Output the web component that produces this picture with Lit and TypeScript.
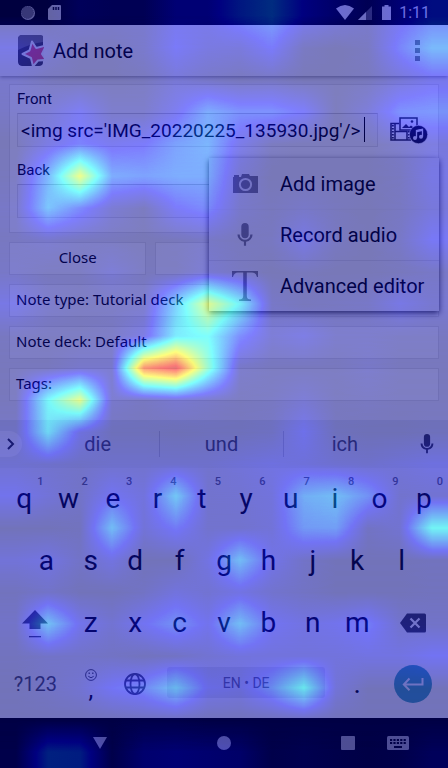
import { LitElement, html, svg, css } from "lit";
import { customElement, state } from "lit/decorators.js";

/* Attention values on a 14 x 24 grid, in hundredths. */
const HEAT: number[][] = [
  [0, 0, 5, 4, 4, 10, 10, 17, 21, 12, 8, 4, 10, 15],
  [9, 5, 1, 1, 4, 12, 8, 7, 13, 2, 0, 2, 15, 25],
  [4, 1, 0, 0, 1, 6, 3, 1, 2, 0, 0, 1, 6, 10],
  [3, 5, 11, 3, 3, 10, 22, 17, 17, 12, 0, 6, 17, 18],
  [0, 8, 14, 10, 12, 20, 24, 9, 1, 0, 0, 0, 3, 7],
  [1, 24, 60, 22, 20, 22, 22, 5, 0, 0, 0, 0, 2, 9],
  [3, 27, 16, 5, 1, 12, 16, 4, 1, 3, 1, 0, 2, 7],
  [2, 4, 2, 1, 0, 1, 3, 1, 2, 9, 2, 0, 3, 12],
  [3, 1, 1, 5, 1, 1, 5, 2, 0, 1, 0, 0, 1, 3],
  [9, 3, 1, 2, 3, 29, 58, 36, 3, 1, 2, 3, 9, 5],
  [2, 1, 1, 2, 8, 34, 38, 16, 5, 8, 3, 3, 2, 2],
  [1, 1, 4, 4, 82, 92, 45, 3, 1, 1, 1, 3, 1, 1],
  [1, 37, 59, 4, 2, 5, 3, 1, 2, 5, 1, 2, 1, 1],
  [3, 33, 9, 2, 2, 1, 2, 2, 3, 11, 2, 1, 1, 2],
  [6, 5, 4, 5, 5, 5, 5, 7, 9, 8, 6, 5, 7, 9],
  [11, 7, 4, 12, 8, 29, 5, 6, 8, 24, 27, 19, 5, 6],
  [1, 1, 2, 27, 7, 14, 5, 5, 7, 20, 21, 3, 6, 38],
  [7, 9, 4, 9, 1, 1, 9, 27, 10, 4, 1, 1, 1, 2],
  [2, 4, 1, 1, 3, 8, 6, 9, 5, 3, 1, 1, 1, 2],
  [4, 28, 11, 6, 12, 19, 11, 27, 12, 9, 11, 15, 5, 4],
  [2, 4, 4, 3, 2, 3, 6, 8, 8, 8, 8, 9, 9, 12],
  [1, 3, 6, 13, 17, 28, 11, 9, 19, 37, 7, 1, 1, 1],
  [1, 1, 1, 1, 2, 2, 1, 1, 1, 1, 1, 1, 1, 1],
  [2, 19, 18, 2, 9, 10, 9, 8, 2, 3, 2, 1, 2, 5],
];

const ROW_ONE = [..."qwertyuiop"];
const ROW_TWO = [..."asdfghjkl"];
const ROW_THREE = [..."zxcvbnm"];

@customElement("heat-layer")
export class HeatLayer extends LitElement {
  static styles = css`
    :host { display: block; pointer-events: none; opacity: 0.5; }
    svg { display: block; width: 100%; height: 100%; }
  `;

  render() {
    const last = HEAT.length - 1;
    return html`<svg viewBox="0 0 14 24" preserveAspectRatio="none" aria-hidden="true">
      <defs>
        <filter id="jet" x="0" y="0" width="1" height="1" color-interpolation-filters="sRGB">
          <feComponentTransfer>
            <feFuncR type="table" tableValues="0 0 0 0 .5 1 1 1 .5" />
            <feFuncG type="table" tableValues="0 0 .5 1 1 1 .5 0 0" />
            <feFuncB type="table" tableValues=".5 1 1 1 .5 0 0 0 0" />
          </feComponentTransfer>
        </filter>
        <linearGradient id="fade" x1="0" y1="0" x2="0" y2="1">
          <stop offset="0" stop-color="#fff" stop-opacity="0" />
          <stop offset="0.8" stop-color="#fff" />
        </linearGradient>
        <mask id="ramp" maskContentUnits="objectBoundingBox" x="0" y="0" width="1" height="1">
          <rect width="1" height="1" fill="url(#fade)" />
        </mask>
        ${HEAT.map((row, r) => svg`<linearGradient id=${"row" + r} gradientUnits="userSpaceOnUse" x1="0.5" y1="0" x2="13.5" y2="0">
          ${row.map((v, c) => {
            const g = Math.round(v * 2.55);
            return svg`<stop offset=${c / 13} stop-color=${`rgb(${g},${g},${g})`} />`;
          })}
        </linearGradient>`)}
      </defs>
      <g filter="url(#jet)">
        <rect width="14" height="24" fill="url(#row0)" />
        ${HEAT.slice(0, last).map((_, r) => svg`
          <rect y=${r + 0.5} width="14" height=${23.5 - r} fill=${`url(#row${r})`} />
          <rect y=${r + 0.5} width="14" height="1.25" fill=${`url(#row${r + 1})`} mask="url(#ramp)" />`)}
        <rect y="23.5" width="14" height="0.5" fill=${`url(#row${last})`} />
      </g>
    </svg>`;
  }
}

const mic = svg`<path d="M12 15a3.4 3.4 0 0 0 3.4-3.4V4.4a3.4 3.4 0 0 0-6.8 0v7.2A3.4 3.4 0 0 0 12 15z"/><path d="M19 11.5h-2.1a4.9 4.9 0 0 1-9.8 0H5a7 7 0 0 0 6 6.8V22h2v-3.7a7 7 0 0 0 6-6.8z"/>`;

@customElement("note-keyboard")
export class NoteKeyboard extends LitElement {
  static styles = css`
    :host { display: block; background: #e7e9ec; font-family: Roboto, sans-serif; color: #0c0e12; }
    button { border: 0; padding: 0; margin: 0; background: none; color: inherit; font: inherit; }
    svg { display: block; }
    .strip { display: flex; align-items: center; height: 48px; background: #dfe2e7; color: #50545c; font-size: 20px; }
    .more { width: 22px; height: 26px; border-radius: 0 13px 13px 0; background: #eff1f4; display: flex; align-items: center; justify-content: center; }
    .words { flex: 1; display: grid; grid-template-columns: 1fr 1fr 1fr; margin-left: 14px; }
    .words button { height: 26px; line-height: 26px; }
    .words button + button { border-left: 1px solid #bcc0c8; }
    .voice { width: 42px; display: flex; justify-content: center; color: #3c4048; }
    .row { display: grid; grid-template-columns: repeat(20, 1fr); height: 62px; padding: 0 2px; }
    .keys { padding-bottom: 2px; }
    .key { grid-column: span 2; font-size: 28px; line-height: 58px; position: relative; }
    .lead { grid-column: 2 / span 2; }
    .wide { grid-column: span 3; display: flex; align-items: center; justify-content: center; color: #50545c; }
    .mode { font-size: 20px; line-height: 24px; }
    .hint { position: absolute; top: 8px; right: 3px; font: 500 11px/12px Roboto, sans-serif; color: #666a72; }
    .icon { grid-column: span 2; display: flex; flex-direction: column; align-items: center; justify-content: center; color: #50545c; }
    .comma { font-size: 24px; line-height: 18px; color: #0c0e12; }
    .space { grid-column: span 8; margin: 13px 10px 16px; border-radius: 3px; background: #d3d6db; color: #666a72; font-size: 14px; }
    .bottom { height: 60px; margin-bottom: 2px; }
    .enter { width: 38px; height: 38px; border-radius: 50%; background: #469fae; color: #dfe6f0; display: flex; align-items: center; justify-content: center; }
  `;

  render() {
    return html`
      <div class="strip">
        <button class="more" aria-label="More tools">
          <svg width="10" height="14" viewBox="0 0 10 14" fill="none" stroke="#30343c" stroke-width="2"><path d="M2 2l5 5-5 5" /></svg>
        </button>
        <div class="words"><button>die</button><button>und</button><button>ich</button></div>
        <button class="voice" aria-label="Voice typing"><svg width="22" height="22" viewBox="0 0 24 24" fill="currentColor">${mic}</svg></button>
      </div>
      <div class="keys">
        <div class="row">
          ${ROW_ONE.map((k, i) => html`<button class="key">${k}<span class="hint">${(i + 1) % 10}</span></button>`)}
        </div>
        <div class="row">
          ${ROW_TWO.map((k, i) => html`<button class="key ${i === 0 ? "lead" : ""}">${k}</button>`)}
        </div>
        <div class="row">
          <button class="wide" aria-label="Shift">
            <svg width="28" height="30" viewBox="0 0 28 30" fill="#4c5058"><path d="M14 2L1 15.500h7.500V21h11v-5.500H27z" /><path d="M8 28h12v1.300H8z" /></svg>
          </button>
          ${ROW_THREE.map((k) => html`<button class="key">${k}</button>`)}
          <button class="wide" aria-label="Backspace">
            <svg width="26" height="20" viewBox="0 0 26 20"><path d="M7 .5h17.500a1.500 1.500 0 0 1 1.500 1.500v16a1.500 1.500 0 0 1-1.500 1.500H7L0 10z" fill="#40444c" /><path d="M10.500 5.500l9 9m0-9l-9 9" stroke="#e7e9ec" stroke-width="2.200" /></svg>
          </button>
        </div>
        <div class="row bottom">
          <button class="wide mode">?123</button>
          <button class="icon" aria-label="Comma and emoji">
            <svg width="12" height="12" viewBox="0 0 12 12" fill="none" stroke="currentColor"><circle cx="6" cy="6" r="5.400" /><path d="M3.300 7.300q2.700 3 5.400 0" /><path d="M4.200 3.500v1.500M7.800 3.500v1.500" stroke-width="1.300" /></svg>
            <span class="comma">,</span>
          </button>
          <button class="icon" aria-label="Switch language">
            <svg width="22" height="22" viewBox="0 0 22 22" fill="none" stroke="currentColor" stroke-width="1.800"><circle cx="11" cy="11" r="10" /><ellipse cx="11" cy="11" rx="4.500" ry="10" /><path d="M2 7.500h18M2 14.500h18" /></svg>
          </button>
          <button class="space">EN • DE</button>
          <button class="key">.</button>
          <button class="wide" aria-label="Enter">
            <span class="enter"><svg width="22" height="14" viewBox="0 0 22 14" fill="none" stroke="currentColor" stroke-width="2"><path d="M20.500 1v6.500H2M7.500 1.500L1.800 7.500l5.700 5.700" /></svg></span>
          </button>
        </div>
      </div>`;
  }
}

@customElement("app-root")
export class AppRoot extends LitElement {
  @state() private front = "<img src='IMG_20220225_135930.jpg'/>";

  static styles = css`
    * { box-sizing: border-box; }
    :host { display: flex; flex-direction: column; position: relative; min-height: 100vh; background: #f3f3f3; color: #080808; font-family: Roboto, sans-serif; overflow: hidden; }
    button { padding: 0; margin: 0; border: 0; background: none; color: inherit; font: inherit; }
    svg { display: block; }
    .status { height: 25px; background: #000; color: #d8d8d8; display: flex; align-items: center; padding: 0 18px 0 20px; }
    .status .left { display: flex; gap: 12px; align-items: center; flex: 1; }
    .right { display: flex; align-items: center; gap: 4px; }
    .time { font-size: 16px; line-height: 25px; margin-left: 4px; }
    .battery { margin-left: 6px; }
    .bar { height: 51px; display: flex; align-items: center; padding: 0 24px 0 18px; background: #f7f7f7; box-shadow: 0 1px 4px rgba(0, 0, 0, 0.4); }
    h1 { flex: 1; margin: 0 0 0 8px; font-size: 20px; line-height: 24px; font-weight: 400; }
    .dots { padding: 4px; }
    main { flex: 1; position: relative; display: flex; flex-direction: column; gap: 9px; padding: 8px 9px 19px; }
    .card { border: 1px solid #e3e3e3; background: #fefefe; padding: 4px 7px 14px; font-size: 15px; }
    .card label { display: block; line-height: 20px; margin-bottom: 4px; }
    .line { display: flex; align-items: center; margin-bottom: 13px; }
    .box { position: relative; flex: 1; height: 34px; }
    input { width: 100%; height: 34px; border: 1px solid #e3e3e3; border-top-color: #ccc; background: #fbfbfb; padding: 0 3px; font: 19px Roboto, sans-serif; color: inherit; outline: none; display: block; border-radius: 0; }
    .caret { position: absolute; left: 347px; top: 4px; width: 1px; height: 25px; background: #000; }
    .media { width: 53px; display: flex; justify-content: center; padding-left: 8px; }
    .actions { display: grid; grid-template-columns: 1fr 1fr 1fr; gap: 9px; }
    .option { height: 33px; border: 1px solid #e3e3e3; background: #fefefe; font-family: "Noto Sans", sans-serif; font-size: 15px; line-height: 20px; padding-bottom: 3px; }
    .wide { text-align: left; padding: 0 6px 3px; }
    .menu { position: absolute; top: 82px; right: 9px; width: 230px; background: #f3f3f3; box-shadow: 0 2px 6px rgba(0, 0, 0, 0.75); }
    .menu button { display: grid; grid-template-columns: 26px 1fr; align-items: center; column-gap: 22px; width: 100%; height: 51px; padding: 0 8px 0 23px; font-size: 20px; white-space: nowrap; text-align: left; color: #050505; }
    .menu button + button { border-top: 1px solid #eee; }
    .menu button:last-child { border-top-color: #dedede; }
    .menu svg { justify-self: center; color: #808080; }
    .nav { height: 50px; background: #000; display: grid; grid-template-columns: 38fr 124fr 124fr 37fr 50fr 50fr 25fr; align-items: center; justify-items: center; color: #9c9c9c; }
    .nav .back { grid-column: 2; }
    .nav .recent { grid-column: 5; }
    .heat { position: absolute; inset: 0; z-index: 10; }
  `;

  render() {
    return html`
      <div class="status">
        <div class="left">
          <svg width="16" height="16" viewBox="0 0 16 16"><circle cx="8" cy="8" r="7" fill="#bbb" /><circle cx="7.500" cy="7.500" r="6" fill="#707070" stroke="#555" stroke-dasharray="1 1" /></svg>
          <svg width="13" height="15" viewBox="0 0 13 15"><path d="M4 0h8a1 1 0 0 1 1 1v13a1 1 0 0 1-1 1H1a1 1 0 0 1-1-1V4z" fill="#c8c8c8" /><path d="M5.500 2v3M8 2v3M10.500 2v3" stroke="#111" stroke-width="1.500" /></svg>
        </div>
        <div class="right">
          <svg width="18" height="15" viewBox="0 0 18 15"><path d="M0 3.500Q9-3.500 18 3.500L9 15z" fill="#d8d8d8" /></svg>
          <svg width="14" height="15" viewBox="0 0 14 15"><path d="M0 15L14 1v14z" fill="#555" /><path d="M0 15L8 7v8z" fill="#d8d8d8" /></svg>
          <svg class="battery" width="9" height="15" viewBox="0 0 9 15"><path d="M2.500 0h4v1.500H9V15H0V1.500h2.500z" fill="#d8d8d8" /></svg>
          <span class="time">1:11</span>
        </div>
      </div>
      <header class="bar">
        <svg width="27" height="32" viewBox="0 0 27 32">
          <defs><clipPath id="tile"><rect width="26" height="31" rx="4" /></clipPath></defs>
          <g clip-path="url(#tile)">
            <rect width="25" height="31" rx="4" fill="#45454b" />
            <path d="M0 0h25v7Q14 8 0 15z" fill="#74747a" />
            <path d="M14 6.500l4.200 6.500 9.800-2.500-4 8.500 4 6-8 .5-5 6-2-8.500L4.500 19l7-3.500z" fill="#db5874" stroke="#eeeef0" stroke-width="2" stroke-linejoin="round" />
          </g>
        </svg>
        <h1>Add note</h1>
        <button class="dots" aria-label="More options"><svg width="5" height="21" viewBox="0 0 5 21" fill="#808080"><path d="M0 0h5v5H0zM0 8h5v5H0zM0 16h5v5H0z" /></svg></button>
      </header>
      <main>
        <section class="card">
          <label for="front">Front</label>
          <div class="line">
            <div class="box">
              <input id="front" type="text" .value=${this.front} @input=${(e: Event) => (this.front = (e.target as HTMLInputElement).value)} />
              <span class="caret"></span>
            </div>
            <button class="media" aria-label="Attach media">
              <svg width="38" height="27" viewBox="0 0 38 27" fill="none" stroke="#2c2c30">
                <path d="M9 6.500H1V23h20" stroke-width="1.500" /><path d="M5 7v16M17 14v9M5 14.500h12" stroke-width="1.500" /><path d="M2.800 8v15M19 14v9" stroke-width="2" stroke-dasharray="1.500 1.500" />
                <rect x="10" y="1" width="17" height="12" stroke-width="1.500" fill="#fefefe" />
                <path d="M12 11l4-4 3 3 2-1.500 4 3V11z" fill="#2c2c30" stroke="none" /><circle cx="22" cy="4.500" r="1.300" fill="#2c2c30" stroke="none" />
                <circle cx="28.500" cy="17.500" r="9.200" fill="#18181c" stroke="#fefefe" stroke-width=".6" />
                <path d="M26.500 21v-7.500l6-1.300v7.500" stroke="#eee" stroke-width="1.300" /><path d="M26.500 14.200l6-1.300" stroke="#eee" stroke-width="2" /><circle cx="25" cy="21" r="2" fill="#eee" stroke="none" /><circle cx="31" cy="19.800" r="2" fill="#eee" stroke="none" />
              </svg>
            </button>
          </div>
          <label for="back">Back</label>
          <div class="box"><input id="back" type="text" /></div>
        </section>
        <div class="actions">
          <button class="option">Close</button>
          <button class="option" aria-label="Preview"></button>
          <button class="option" aria-label="Add"></button>
        </div>
        <button class="option wide">Note type: Tutorial deck</button>
        <button class="option wide">Note deck: Default</button>
        <button class="option wide">Tags:</button>
        <nav class="menu" aria-label="Attach">
          <button>
            <svg width="25" height="19" viewBox="0 0 25 19"><path d="M0 3h1V1h5v2h2l1-3h7l1 2h8v17H0z" fill="currentColor" /><circle cx="12.500" cy="10.500" r="5.600" fill="none" stroke="#e8e8e8" stroke-width="2" /></svg>
            Add image
          </button>
          <button>
            <svg width="28" height="26" viewBox="0 0 24 24" fill="currentColor">${mic}</svg>
            Record audio
          </button>
          <button>
            <svg width="26" height="30" viewBox="0 0 26 30" fill="currentColor"><path d="M0 0h26v6h-1q-1-4.500-5-4.500h-5.200V25q0 3.500 4.200 3.500V30H7v-1.500q4.200 0 4.200-3.500V1.500H6Q2 1.500 1 6H0z" /></svg>
            Advanced editor
          </button>
        </nav>
      </main>
      <note-keyboard></note-keyboard>
      <div class="nav">
        <button class="back" aria-label="Back"><svg width="14" height="12" viewBox="0 0 14 12" fill="currentColor"><path d="M0 0h14L7 12z" /></svg></button>
        <button aria-label="Home"><svg width="14" height="14" viewBox="0 0 14 14" fill="currentColor"><circle cx="7" cy="7" r="7" /></svg></button>
        <button class="recent" aria-label="Recent apps"><svg width="14" height="14" viewBox="0 0 14 14" fill="currentColor"><rect width="14" height="14" rx="1" /></svg></button>
        <button aria-label="Choose keyboard"><svg width="22" height="14" viewBox="0 0 22 14"><rect width="22" height="14" rx="1.500" fill="currentColor" /><path d="M3 4h16M3 7h16" stroke="#000" stroke-width="2" stroke-dasharray="2.200 1.200" /><path d="M7 11h8" stroke="#000" stroke-width="2" /></svg></button>
      </div>
      <heat-layer class="heat"></heat-layer>`;
  }
}
